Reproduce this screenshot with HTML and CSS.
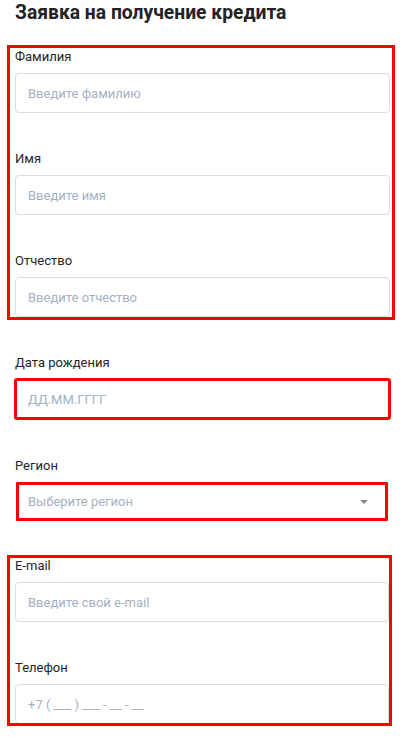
FILE: index.html
```html
<!DOCTYPE html>
<html lang="ru">
<head>
<meta charset="utf-8">
<title>Заявка на получение кредита</title>
<link rel="stylesheet" href="styles.css">
</head>
<body>
<div class="page">
  <h1 class="title">Заявка на получение кредита</h1>

  <div class="mark mark-names">
    <div class="field">
      <label class="label">Фамилия</label>
      <div class="input"><span class="ph">Введите фамилию</span></div>
    </div>
    <div class="field">
      <label class="label">Имя</label>
      <div class="input"><span class="ph">Введите имя</span></div>
    </div>
    <div class="field field-last">
      <label class="label">Отчество</label>
      <div class="input"><span class="ph">Введите отчество</span></div>
    </div>
  </div>

  <div class="field field-date">
    <label class="label">Дата рождения</label>
    <div class="input input-marked"><span class="ph">ДД.ММ.ГГГГ</span></div>
  </div>

  <div class="field field-region">
    <label class="label">Регион</label>
    <div class="select"><span class="ph">Выберите регион</span><span class="caret"></span></div>
  </div>

  <div class="mark mark-contacts">
    <div class="field">
      <label class="label">E-mail</label>
      <div class="input"><span class="ph">Введите свой e-mail</span></div>
    </div>
    <div class="field field-last">
      <label class="label">Телефон</label>
      <div class="input"><span class="ph">+7 ( ___ ) ___ - __ - __</span></div>
    </div>
  </div>
</div>
</body>
</html>
```

FILE: styles.css
```css
* {
  box-sizing: border-box;
}

body {
  margin: 0;
  background: #ffffff;
  font-family: Roboto, "Liberation Sans", Arial, sans-serif;
  color: #212529;
}

.page {
  padding: 0 19px 0 15px;
}

.title {
  margin: 0 0 19px 0;
  font-size: 19.3px;
  line-height: 26px;
  font-weight: 700;
  color: #222222;
}

.mark {
  border: 3px solid #ff0000;
  overflow: hidden;
}

.mark-names {
  margin: 0 -5px 0 -8px;
  padding: 1px 2px 0 5px;
  height: 275px;
}

.mark-contacts {
  margin: 34px -2px 0 -8px;
  padding: 0 0 0 5px;
  height: 171px;
}

.field {
  display: flex;
  flex-direction: column;
  margin-bottom: 38px;
}

.field-last {
  margin-bottom: 0;
}

.field-date {
  margin-top: 35px;
  margin-bottom: 39px;
}

.field-region {
  margin-bottom: 0;
}

.label {
  display: block;
  font-size: 13px;
  line-height: 16px;
  margin-bottom: 8px;
  color: #212529;
}

.input {
  height: 40px;
  border: 1px solid #d6dde4;
  border-radius: 4px;
  padding: 0 12px;
  display: flex;
  align-items: center;
  background: #ffffff;
}

.input-marked {
  border-radius: 2px;
  outline: 3px solid #ff0000;
  outline-offset: -2px;
}

.ph {
  font-size: 13px;
  color: #a3b1c2;
  white-space: pre;
}

.select {
  height: 39px;
  margin: 0 2px 0 1px;
  border: 3px solid #ff0000;
  border-radius: 1px;
  padding: 0 17px 0 9px;
  display: flex;
  align-items: center;
  justify-content: space-between;
}

.caret {
  width: 0;
  height: 0;
  border-left: 4px solid transparent;
  border-right: 4px solid transparent;
  border-top: 4px solid #8a8a8a;
}
```
